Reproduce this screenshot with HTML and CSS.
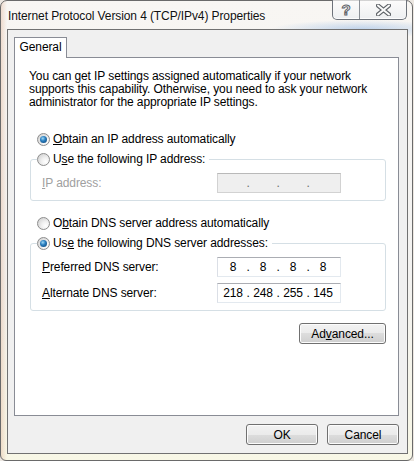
FILE: index.html
```html
<!DOCTYPE html>
<html lang="en">
<head>
    <meta charset="UTF-8">
    <meta name="viewport" content="width=device-width, initial-scale=1.0">
    <title>Internet Protocol Version 4 (TCP/IPv4) Properties</title>
    <link rel="stylesheet" href="styles.css">
</head>
<body>
    <div class="window">
        <div class="titlebar">
            <div class="title">Internet Protocol Version 4 (TCP/IPv4) Properties</div>
            <div class="caption-buttons">
                <span class="cap-btn cap-help">?</span>
                <span class="cap-btn cap-close">
                    <svg width="15" height="12" viewBox="0 0 15 12">
                        <path d="M2 1.5 L13 10.5 M13 1.5 L2 10.5" stroke="#5f6368" stroke-width="4.2" stroke-linecap="round"/>
                        <path d="M2 1.5 L13 10.5 M13 1.5 L2 10.5" stroke="#fbfbfb" stroke-width="2" stroke-linecap="round"/>
                    </svg>
                </span>
            </div>
        </div>

        <div class="client">
            <div class="tabs">
                <div class="tab active">General</div>
            </div>

            <div class="tab-panel">
                <p class="desc">You can get IP settings assigned automatically if your network<br>supports this capability. Otherwise, you need to ask your network<br>administrator for the appropriate IP settings.</p>

                <div class="option first">
                    <span class="radio checked"></span>
                    <span><u>O</u>btain an IP address automatically</span>
                </div>

                <fieldset class="group">
                    <legend class="option">
                        <span class="radio"></span>
                        <span>U<u>s</u>e the following IP address:</span>
                    </legend>
                    <div class="field disabled">
                        <span class="field-label"><u>I</u>P address:</span>
                        <div class="ip-box">
                            <span class="octet"></span><span class="dot">.</span>
                            <span class="octet"></span><span class="dot">.</span>
                            <span class="octet"></span><span class="dot">.</span>
                            <span class="octet"></span>
                        </div>
                    </div>
                </fieldset>

                <div class="option spaced">
                    <span class="radio"></span>
                    <span>O<u>b</u>tain DNS server address automatically</span>
                </div>

                <fieldset class="group">
                    <legend class="option">
                        <span class="radio checked"></span>
                        <span>Us<u>e</u> the following DNS server addresses:</span>
                    </legend>
                    <div class="field">
                        <span class="field-label"><u>P</u>referred DNS server:</span>
                        <div class="ip-box">
                            <span class="octet">8</span><span class="dot">.</span>
                            <span class="octet">8</span><span class="dot">.</span>
                            <span class="octet">8</span><span class="dot">.</span>
                            <span class="octet">8</span>
                        </div>
                    </div>
                    <div class="field">
                        <span class="field-label"><u>A</u>lternate DNS server:</span>
                        <div class="ip-box">
                            <span class="octet">218</span><span class="dot">.</span>
                            <span class="octet">248</span><span class="dot">.</span>
                            <span class="octet">255</span><span class="dot">.</span>
                            <span class="octet">145</span>
                        </div>
                    </div>
                </fieldset>

                <div class="advanced-row">
                    <button class="btn btn-advanced">Ad<u>v</u>anced...</button>
                </div>
            </div>

            <div class="footer">
                <button class="btn">OK</button>
                <button class="btn">Cancel</button>
            </div>
        </div>
    </div>
</body>
</html>
```

FILE: styles.css
```css
body {
    margin: 0;
    background-color: #ece7e1;
    font-family: "Liberation Sans", Arial, sans-serif;
    font-size: 12px;
    letter-spacing: -0.1px;
    color: #000;
}

u {
    text-underline-offset: 1px;
}

/* window frame */
.window {
    width: 413px;
    height: 461px;
    box-sizing: border-box;
    display: flex;
    flex-direction: column;
    border: 1px solid #6a6a6a;
    border-radius: 7px 7px 6px 6px;
    background:
        radial-gradient(ellipse 90px 9px at 360px 28px, rgba(125, 170, 225, 0.45), rgba(125, 170, 225, 0)),
        linear-gradient(to right, rgba(226, 186, 160, 0.45) 0, rgba(226, 186, 160, 0) 6px),
        linear-gradient(to bottom, #f8f6f3 0, #f3f2f0 60%, #f8f7e6 100%);
}

.titlebar {
    display: flex;
    align-items: flex-start;
    height: 28px;
}

.title {
    padding: 8px 0 0 7px;
    line-height: 14px;
    color: #111;
    text-shadow: 0 0 6px #fff, 0 0 3px #fff;
}

.caption-buttons {
    display: flex;
    margin: -1px 5px 0 auto;
    height: 19px;
    border: 1px solid #6d727a;
    border-top: none;
    border-radius: 0 0 5px 5px;
    background: linear-gradient(to bottom, rgba(255, 255, 255, 0.7), rgba(236, 238, 241, 0.85));
    box-shadow: inset 0 -1px 0 rgba(255, 255, 255, 0.8);
}

.cap-btn {
    display: flex;
    align-items: center;
    justify-content: center;
}

.cap-help {
    width: 26px;
    font-size: 15px;
    font-weight: bold;
    color: #fff;
    -webkit-text-stroke: 1px #5f6368;
    padding-bottom: 1px;
}

.cap-close {
    width: 46px;
    border-left: 1px solid #8a8f96;
}

/* client area */
.client {
    flex: 1;
    display: flex;
    flex-direction: column;
    margin: 0 4px 6px 6px;
    padding: 7px 8px 0 6px;
    border: 1px solid #717171;
    background-color: #f0f0f0;
}

.tabs {
    display: flex;
}

.tab {
    width: 53px;
    height: 21px;
    box-sizing: border-box;
    margin-bottom: -1px;
    border: 1px solid #898c95;
    border-bottom: none;
    background-color: #fff;
    text-align: center;
    line-height: 19px;
    position: relative;
}

.tab-panel {
    height: 359px;
    box-sizing: border-box;
    border: 1px solid #898c95;
    background-color: #fff;
}

.desc {
    margin: 12px 0 0 14px;
    line-height: 13px;
}

.option {
    display: flex;
    align-items: center;
    gap: 3px;
    height: 14px;
    line-height: 14px;
    white-space: nowrap;
}

.option.first {
    margin: 23px 0 0 22px;
}

.option.spaced {
    margin: 15px 0 0 22px;
}

.radio {
    width: 13px;
    height: 13px;
    box-sizing: border-box;
    display: flex;
    align-items: center;
    justify-content: center;
    border: 1px solid #8d8d8d;
    border-radius: 50%;
    background: radial-gradient(circle at 70% 70%, #ffffff 0, #f1f1f1 35%, #c9c9c9 100%);
}

.radio.checked::after {
    content: "";
    width: 7px;
    height: 7px;
    border-radius: 50%;
    background: radial-gradient(circle at 40% 35%, #9fd8f6 0, #2a7fc0 40%, #0b3f70 100%);
}

/* group boxes */
.group {
    width: 356px;
    box-sizing: border-box;
    margin: 6px 0 0 15px;
    padding: 0 0 7px 0;
    border: 1px solid #d5dfe5;
    border-radius: 3px;
    min-inline-size: 0;
}

.group legend {
    margin-left: 6px;
    padding: 0 4px 0 0;
}

.field {
    display: flex;
    align-items: center;
    margin: 7px 0 0 11px;
}

.field + .field {
    margin-top: 6px;
}

.field-label {
    width: 175px;
}

.field.disabled .field-label {
    color: #a0a0a0;
}

.ip-box {
    display: flex;
    align-items: center;
    width: 124px;
    height: 20px;
    box-sizing: border-box;
    padding-left: 3px;
    border: 1px solid #e3e9ef;
    border-top-color: #abadb3;
    border-left-color: #dbdfe6;
    background-color: #fff;
}

.field.disabled .ip-box {
    background-color: #efefef;
    border-color: #d2d2d2;
    border-top-color: #b9b9b9;
}

.octet {
    width: 24px;
    text-align: center;
}

.dot {
    width: 6px;
    text-align: center;
}

.field.disabled .dot {
    color: #6d6d6d;
}

/* buttons */
.btn {
    height: 21px;
    box-sizing: border-box;
    padding: 0;
    border: 1px solid #707070;
    border-radius: 3px;
    background: linear-gradient(to bottom, #f2f2f2 0, #ebebeb 50%, #dddddd 50%, #cfcfcf 100%);
    box-shadow: inset 0 0 0 1px #fcfcfc;
    font-family: inherit;
    font-size: 12px;
    letter-spacing: -0.1px;
    color: #000;
}

.advanced-row {
    display: flex;
    justify-content: flex-end;
    margin: 12px 12px 0 0;
}

.btn-advanced {
    width: 87px;
}

.footer {
    display: flex;
    justify-content: flex-end;
    gap: 9px;
    margin-top: 8px;
}

.footer .btn {
    width: 72px;
}
```
